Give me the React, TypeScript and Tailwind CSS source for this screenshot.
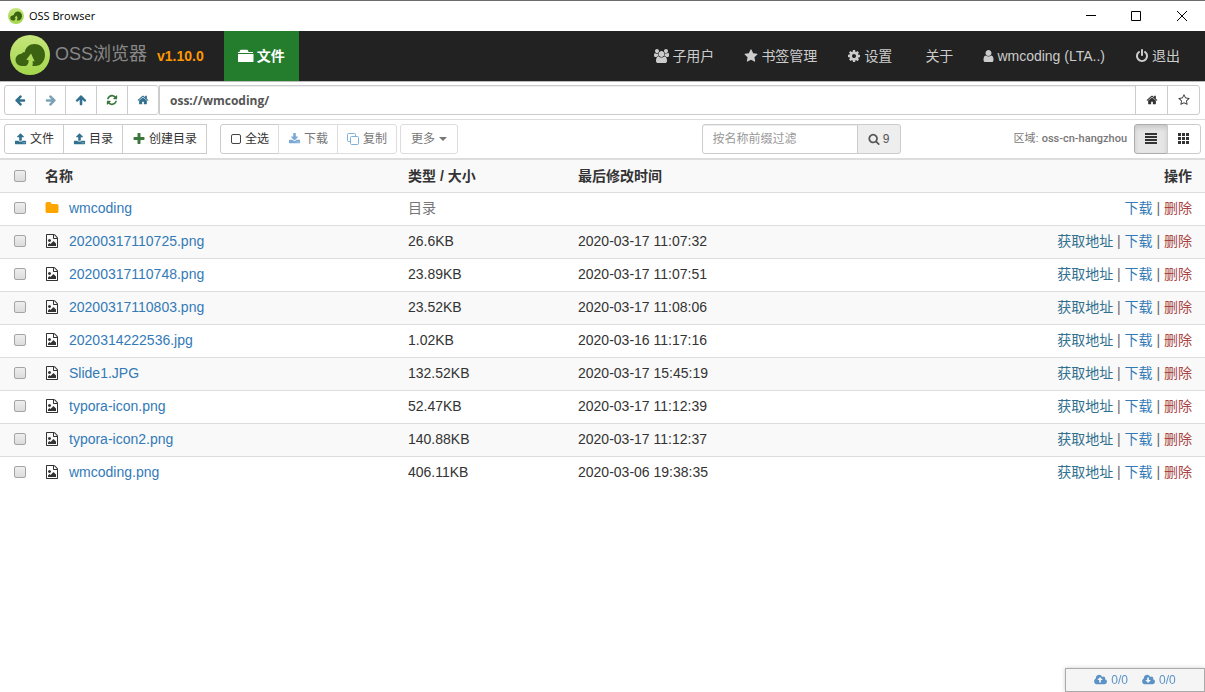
import React from "react";
import { useState } from "react";

type IconName = keyof typeof ICONS;

const CLOUD =
  "m640 288q0 159-112.5 271.5t-271.5 112.5h-1088q-185 0-316.5-131.5t-131.5-316.5q0-130 70-240t188-165q-2-30-2-43 0-212 150-362t362-150q156 0 285.5 87t188.5 231q71-62 166-62 106 0 181 75t75 181q0 76-41 138 130 31 213.5 135.5t83.5 238.5z";

const ICONS = {
  arrowLeft:
    "M1664 896v128q0 53-32.5 90.5t-84.5 37.5h-704l293 294q38 36 38 90t-38 90l-75 76q-37 37-90 37-52 0-91-37l-651-652q-37-37-37-90 0-52 37-91l651-650q38-38 91-38 52 0 90 38l75 74q38 38 38 91t-38 91l-293 293h704q52 0 84.5 37.5t32.5 90.5z",
  arrowRight:
    "M1600 960q0 54-37 91l-651 651q-39 37-91 37-51 0-90-37l-75-75q-38-38-38-91t38-91l293-293h-704q-52 0-84.5-37.5t-32.5-90.5v-128q0-53 32.5-90.5t84.5-37.5h704l-293-294q-38-36-38-90t38-90l75-75q38-38 90-38 53 0 91 38l651 651q37 35 37 90z",
  arrowUp:
    "M1675 971q0 51-37 90l-75 75q-38 38-91 38-54 0-90-38l-294-293v704q0 52-37.5 84.5t-90.5 32.5h-128q-53 0-90.5-32.5t-37.5-84.5v-704l-294 293q-36 38-90 38t-90-38l-75-75q-38-38-38-90 0-53 38-91l651-651q35-37 90-37 54 0 91 37l651 651q37 39 37 91z",
  refresh:
    "M1639 1056q0 5-1 7-64 268-268 434.5t-478 166.5q-146 0-282.5-55t-243.5-157l-129 129q-19 19-45 19t-45-19-19-45v-448q0-26 19-45t45-19h448q26 0 45 19t19 45-19 45l-137 137q71 66 161 102t187 36q134 0 250-65t186-179q11-17 53-117 8-23 30-23h192q13 0 22.5 9.5t9.5 22.5zm25-800v448q0 26-19 45t-45 19h-448q-26 0-45-19t-19-45 19-45l138-138q-148-137-349-137-134 0-250 65t-186 179q-11 17-53 117-8 23-30 23h-199q-13 0-22.5-9.5t-9.5-22.5v-7q65-268 270-434.5t480-166.5q146 0 284 55.5t245 156.5l130-129q19-19 45-19t45 19 19 45z",
  home: "M1472 992v480q0 26-19 45t-45 19h-384v-384h-256v384h-384q-26 0-45-19t-19-45v-480q0-1 .5-3t.5-3l575-474 575 474q1 2 1 6zm223-69l-62 74q-8 9-21 11h-3q-13 0-21-7l-692-577-692 577q-12 8-24 7-13-2-21-11l-62-74q-8-10-7-23.5t11-21.5l719-599q32-26 76-26t76 26l244 204v-195q0-14 9-23t23-9h192q14 0 23 9t9 23v408l219 182q10 8 11 21.5t-7 23.5z",
  starOutline:
    "M1201 1004l306-297-422-62-189-382-189 382-422 62 306 297-73 421 378-199 377 199zm527-357q0 22-26 48l-363 354 86 500q1 7 1 20 0 50-41 50-19 0-40-12l-449-236-449 236q-22 12-40 12-21 0-31.5-14.5t-10.5-35.5q0-6 2-20l86-500-364-354q-25-27-25-48 0-37 56-46l502-73 225-455q19-41 49-41t49 41l225 455 502 73q56 9 56 46z",
  star: "M1728 647q0 22-26 48l-363 354 86 500q1 7 1 20 0 21-10.5 35.5t-30.5 14.5q-19 0-40-12l-449-236-449 236q-22 12-40 12-21 0-31.5-14.5t-10.5-35.5q0-6 2-20l86-500-364-354q-25-27-25-48 0-37 56-46l502-73 225-455q19-41 49-41t49 41l225 455 502 73q56 9 56 46z",
  upload:
    "M1344 1472q0-26-19-45t-45-19-45 19-19 45 19 45 45 19 45-19 19-45zm256 0q0-26-19-45t-45-19-45 19-19 45 19 45 45 19 45-19 19-45zm128-224v320q0 40-28 68t-68 28h-1472q-40 0-68-28t-28-68v-320q0-40 28-68t68-28h427q21 56 70.5 92t110.5 36h256q61 0 110.5-36t70.5-92h427q40 0 68 28t28 68zm-325-648q-17 40-59 40h-256v448q0 26-19 45t-45 19h-256q-26 0-45-19t-19-45v-448h-256q-42 0-59-40-17-39 14-69l448-448q18-19 45-19t45 19l448 448q31 30 14 69z",
  download:
    "M1344 1344q0-26-19-45t-45-19-45 19-19 45 19 45 45 19 45-19 19-45zm256 0q0-26-19-45t-45-19-45 19-19 45 19 45 45 19 45-19 19-45zm128-224v320q0 40-28 68t-68 28h-1472q-40 0-68-28t-28-68v-320q0-40 28-68t68-28h465l135 136q58 56 136 56t136-56l136-136h464q40 0 68 28t28 68zm-325-569q17 41-14 70l-448 448q-18 19-45 19t-45-19l-448-448q-31-29-14-70 17-39 59-39h256v-448q0-26 19-45t45-19h256q26 0 45 19t19 45v448h256q42 0 59 39z",
  plus: "M1600 736v192q0 40-28 68t-68 28h-416v416q0 40-28 68t-68 28h-192q-40 0-68-28t-28-68v-416h-416q-40 0-68-28t-28-68v-192q0-40 28-68t68-28h416v-416q0-40 28-68t68-28h192q40 0 68 28t28 68v416h416q40 0 68 28t28 68z",
  cog: "M1152 896q0-106-75-181t-181-75-181 75-75 181 75 181 181 75 181-75 75-181zm512-109v222q0 12-8 23t-20 13l-185 28q-19 54-39 91 35 50 107 138 10 12 10 25t-9 23q-27 37-99 108t-94 71q-12 0-26-9l-138-108q-44 23-91 38-16 136-29 186-7 28-36 28h-222q-14 0-24.5-8.5t-11.5-21.5l-28-184q-49-16-90-37l-141 107q-10 9-25 9-14 0-25-11-126-114-165-168-7-10-7-23 0-12 8-23 15-21 51-66.5t54-70.5q-27-50-41-99l-183-27q-13-2-21-12.5t-8-23.5v-222q0-12 8-23t19-13l186-28q14-46 39-92-40-57-107-138-10-12-10-24 0-10 9-23 26-36 98.5-107.5t94.5-71.5q13 0 26 10l138 107q44-23 91-38 16-136 29-186 7-28 36-28h222q14 0 24.5 8.5t11.5 21.5l28 184q49 16 90 37l142-107q9-9 24-9 13 0 25 10 129 119 165 170 7 8 7 22 0 12-8 23-15 21-51 66.5t-54 70.5q26 50 41 98l183 28q13 2 21 12.5t8 23.5z",
  user: "M1536 1399q0 109-62.5 187t-150.5 78h-854q-88 0-150.5-78t-62.5-187q0-85 8.5-160.5t31.5-152 58.5-131 94-89 134.5-34.5q131 128 313 128t313-128q76 0 134.5 34.5t94 89 58.5 131 31.5 152 8.5 160.5zm-256-887q0 159-112.5 271.5t-271.5 112.5-271.5-112.5-112.5-271.5 112.5-271.5 271.5-112.5 271.5 112.5 112.5 271.5z",
  power:
    "M1664 896q0 156-61 298t-164 245-245 164-298 61-298-61-245-164-164-245-61-298q0-182 80.5-343t226.5-270q43-32 95.5-25t83.5 50q32 42 24.5 94.5t-49.5 84.5q-98 74-151.5 181t-53.5 228q0 104 40.5 198.5t109.5 163.5 163.5 109.5 198.5 40.5 198.5-40.5 163.5-109.5 109.5-163.5 40.5-198.5q0-121-53.5-228t-151.5-181q-42-32-49.5-84.5t24.5-94.5q31-43 84-50t95 25q146 109 226.5 270t80.5 343zm-640-768v640q0 52-38 90t-90 38-90-38-38-90v-640q0-52 38-90t90-38 90 38 38 90z",
  search:
    "M1216 832q0-185-131.5-316.5t-316.5-131.5-316.5 131.5-131.5 316.5 131.5 316.5 316.5 131.5 316.5-131.5 131.5-316.5zm512 832q0 52-38 90t-90 38q-54 0-90-38l-343-342q-179 124-399 124-143 0-273.5-55.5t-225-150-150-225-55.5-273.5 55.5-273.5 150-225 225-150 273.5-55.5 273.5 55.5 225 150 150 225 55.5 273.5q0 220-124 399l343 343q37 37 37 90z",
  image:
    "M1596 380q28 28 48 76t20 88v1152q0 40-28 68t-68 28h-1344q-40 0-68-28t-28-68v-1600q0-40 28-68t68-28h896q40 0 88 20t76 48zm-444-244v376h376q-10-29-22-41l-313-313q-12-12-41-22zm384 1528v-1024h-416q-40 0-68-28t-28-68v-416h-768v1536h1280zm-128-448v320h-1024v-192l192-192 128 128 384-384zm-832-192q-80 0-136-56t-56-136 56-136 136-56 136 56 56 136-56 136-136 56z",
  folder:
    "M1728 608v704q0 92-66 158t-158 66h-1216q-92 0-158-66t-66-158v-960q0-92 66-158t158-66h320q92 0 158 66t66 158v32h672q92 0 158 66t66 158z",
  users:
    "M529 896q-162 5-265 128h-134q-82 0-138-40.5t-56-118.5q0-353 124-353 6 0 43.5 21t97.5 42.5 119 21.5q67 0 133-23-5 37-5 66 0 159 90 290zm1071 637q0 120-73 189.5t-194 69.5h-874q-121 0-194-69.5t-73-189.5q0-53 3.5-103.5t14-109 26.5-108.5 43-97.5 62-81 85.5-53.5 111.5-20q10 0 43 21.5t73 48 107 48 135 21.5 135-21.5 107-48 73-48 43-21.5q61 0 111.5 20t85.5 53.5 62 81 43 97.5 26.5 108.5 14 109 3.5 103.5zm-1024-1277q0 106-75 181t-181 75-181-75-75-181 75-181 181-75 181 75 75 181zm704 384q0 159-112.5 271.5t-271.5 112.5-271.5-112.5-112.5-271.5 112.5-271.5 271.5-112.5 271.5 112.5 112.5 271.5zm576 225q0 78-56 118.5t-138 40.5h-134q-103-123-265-128 90-131 90-290 0-29-5-66 66 23 133 23 59 0 119-21.5t97.5-42.5 43.5-21q124 0 124 353zm-128-609q0 106-75 181t-181 75-181-75-75-181 75-181 181-75 181 75 75 181z",
  cloudUp:
    "M1216 864q0-14-9-23l-352-352q-9-9-23-9t-23 9l-351 351q-10 12-10 24 0 14 9 23t23 9h224v352q0 13 9.5 22.5t22.5 9.5h192q13 0 22.5-9.5t9.5-22.5v-352h224q13 0 22.5-9.5t9.5-22.5z" +
    CLOUD,
  cloudDown:
    "M1216 928q0-14-9-23t-23-9h-224v-352q0-13-9.5-22.5t-22.5-9.5h-192q-13 0-22.5 9.5t-9.5 22.5v352h-224q-13 0-22.5 9.5t-9.5 22.5q0 14 9 23l352 352q9 9 23 9t23-9l351-351q10-12 10-24z" +
    CLOUD.replace("m640 288", "m640 224"),
};

// glyphs that are not 14 units wide
const VIEW_BOXES: Partial<Record<IconName, string>> = {
  user: "192 0 1408 1792",
  users: "-64 0 1920 1792",
  cloudUp: "-64 0 1920 1792",
  cloudDown: "-64 0 1920 1792",
};

const Icon: React.FC<{ name: IconName; className?: string }> = ({
  name,
  className = "h-3.5 w-3.5",
}) => (
  <svg
    viewBox={VIEW_BOXES[name] || "0 0 1792 1792"}
    fill="currentColor"
    aria-hidden="true"
    className={`shrink-0 ${className}`}
  >
    <path d={ICONS[name]} />
  </svg>
);

const Logo: React.FC<{ className: string }> = ({ className }) => (
  <svg viewBox="0 0 40 40" aria-hidden="true" className={`shrink-0 ${className}`}>
    <defs>
      <linearGradient id="logoFill" x1="0" y1="0" x2="0" y2="1">
        <stop offset="0" stopColor="#c6e67c" />
        <stop offset="1" stopColor="#a3d64b" />
      </linearGradient>
    </defs>
    <circle cx="20" cy="20" r="20" fill="url(#logoFill)" />
    <path
      d="M11.500 31A6 6 0 0 1 5.500 25C5.500 21.500 8 19 11.500 18.700C12.300 17.600 13.500 17.200 14.700 17.300C15.500 12.500 19.500 9 24.500 9C30.500 9 35 13.700 35 19.700C35 26 31 31 25 31H22.300C23 29.500 22.900 28 22.500 26L24.700 26.500L21 18.500L16.300 24.800L18.700 25.300C18.700 28 17.700 30 16 31Z"
      fill="#3c6311"
    />
  </svg>
);

interface FileRow {
  name: string;
  size: string;
  date?: string;
  folder?: boolean;
}

const files: FileRow[] = [
  { name: "wmcoding", size: "目录", folder: true },
  { name: "20200317110725.png", size: "26.6KB", date: "2020-03-17 11:07:32" },
  { name: "20200317110748.png", size: "23.89KB", date: "2020-03-17 11:07:51" },
  { name: "20200317110803.png", size: "23.52KB", date: "2020-03-17 11:08:06" },
  { name: "2020314222536.jpg", size: "1.02KB", date: "2020-03-16 11:17:16" },
  { name: "Slide1.JPG", size: "132.52KB", date: "2020-03-17 15:45:19" },
  { name: "typora-icon.png", size: "52.47KB", date: "2020-03-17 11:12:39" },
  { name: "typora-icon2.png", size: "140.88KB", date: "2020-03-17 11:12:37" },
  { name: "wmcoding.png", size: "406.11KB", date: "2020-03-06 19:38:35" },
];

const TitleBar: React.FC = () => (
  <header className="flex h-[31px] items-center border-t border-[#6d6b6d] bg-white pl-2 text-black">
    <Logo className="h-4 w-4" />
    <h1 className="ml-[5px] flex-1 font-['Open_Sans','Noto_Sans',sans-serif] text-[11px]">
      OSS Browser
    </h1>
    <button aria-label="Minimize" className="flex h-full w-[45px] items-center justify-center">
      <svg viewBox="0 0 10 10" className="h-2.5 w-2.5" stroke="currentColor">
        <path d="M0 4.500h10" />
      </svg>
    </button>
    <button aria-label="Maximize" className="flex h-full w-[46px] items-center justify-center">
      <svg viewBox="0 0 10 10" className="h-2.5 w-2.5" stroke="currentColor" fill="none">
        <path d="M.5.5h9v9h-9z" />
      </svg>
    </button>
    <button aria-label="Close" className="flex h-full w-[46px] items-center justify-center">
      <svg viewBox="0 0 10 10" className="h-2.5 w-2.5" stroke="currentColor">
        <path d="M0 0l10 10M10 0L0 10" />
      </svg>
    </button>
  </header>
);

const NavLink: React.FC<{
  icon?: IconName;
  iconClass?: string;
  children: React.ReactNode;
}> = ({ icon, iconClass, children }) => (
  <a href="#" className="flex items-center gap-[3px] px-[15px] hover:text-white">
    {icon ? <Icon name={icon} className={iconClass} /> : <span />}
    {children}
  </a>
);

const NavBar: React.FC = () => (
  <nav className="flex h-[51px] items-stretch border-b border-[#bbb] bg-[#222] pr-2.5 text-sm whitespace-nowrap text-[#ccc]">
    <a href="#" className="flex items-center pl-2.5">
      <Logo className="mb-0.5 h-10 w-10" />
      <span className="mb-1 ml-[5px] text-lg leading-5 text-[#888]">OSS浏览器</span>
      <span className="ml-2.5 text-sm font-bold text-[#ff9800]">v1.10.0</span>
    </a>
    <a
      href="#"
      className="ml-5 flex items-center gap-[3px] bg-[#247d2d] px-3.5 font-bold text-white"
    >
      <svg viewBox="0 0 16 14" className="h-3.5 w-4" fill="currentColor" aria-hidden="true">
        <path d="M0 3h1.500l.5-1.500q.3-.7 1-.7h6q.7 0 1 .7l.5 1.500H15v1H0zM0 5h15.500v7.500q0 .5-.5.5H.5q-.5 0-.5-.5z" />
      </svg>
      文件
    </a>
    <div className="ml-auto flex items-stretch">
      <NavLink icon="users" iconClass="h-3.5 w-[15px]">
        子用户
      </NavLink>
      <NavLink icon="star">书签管理</NavLink>
      <NavLink icon="cog">设置</NavLink>
      <NavLink>关于</NavLink>
      <NavLink icon="user" iconClass="h-3.5 w-[11px]">
        wmcoding (LTA..)
      </NavLink>
      <NavLink icon="power">退出</NavLink>
    </div>
  </nav>
);

const iconButton =
  "-ml-px flex h-[30px] items-center justify-center border border-[#ccc] bg-white";

const AddressBar: React.FC = () => {
  const [address, setAddress] = useState<string>("oss://wmcoding/");

  return (
    <div className="flex items-center border-b border-[#ddd] pt-[3px] pr-[5px] pb-1 pl-1">
      <div className="flex pl-px text-[#31708f]">
        <button aria-label="后退" className={`${iconButton} w-8 rounded-l-[3px]`}>
          <Icon name="arrowLeft" className="h-3 w-3" />
        </button>
        <button aria-label="前进" disabled className={`${iconButton} w-[31px] text-[#31708f]/65`}>
          <Icon name="arrowRight" className="h-3 w-3" />
        </button>
        <button aria-label="上级目录" className={`${iconButton} w-8`}>
          <Icon name="arrowUp" className="h-3 w-3" />
        </button>
        <button aria-label="刷新" className={`${iconButton} w-8 text-[#3c763d]`}>
          <Icon name="refresh" className="h-3 w-3" />
        </button>
        <button aria-label="首页" className={`${iconButton} w-8 rounded-r-[3px]`}>
          <Icon name="home" className="h-3 w-3" />
        </button>
      </div>
      <input
        type="text"
        aria-label="地址"
        value={address}
        onChange={(e) => setAddress(e.target.value)}
        className="h-[30px] min-w-0 flex-1 border border-[#ccc] px-2.5 font-['Open_Sans',sans-serif] text-xs font-bold text-[#555] shadow-[inset_0_1px_1px_rgba(0,0,0,0.075)]"
      />
      <button aria-label="设为首页" className={`${iconButton} w-[33px]`}>
        <Icon name="home" className="h-3 w-3" />
      </button>
      <button aria-label="收藏" className={`${iconButton} w-[33px] rounded-r-[3px]`}>
        <Icon name="starOutline" className="h-3 w-3" />
      </button>
    </div>
  );
};

const toolButton =
  "-ml-px flex h-[30px] items-center gap-[3px] border bg-white px-[9px]";

const ToolBar: React.FC<{ allChecked: boolean; onToggleAll: () => void }> = ({
  allChecked,
  onToggleAll,
}) => {
  const [filter, setFilter] = useState<string>("");

  return (
    <div className="flex items-center border-b-2 border-[#ddd] px-1 py-1 text-xs whitespace-nowrap">
      <div className="flex pl-px">
        <button className={`${toolButton} rounded-l-[3px] border-[#ccc]`}>
          <Icon name="upload" className="h-3 w-[13px] text-[#31708f]" />
          文件
        </button>
        <button className={`${toolButton} border-[#ccc]`}>
          <Icon name="upload" className="h-3 w-[13px] text-[#31708f]" />
          目录
        </button>
        <button className={`${toolButton} border-[#ccc]`}>
          <Icon name="plus" className="h-3.5 w-3.5 text-[#3c763d]" />
          创建目录
        </button>
      </div>
      <div className="ml-[13px] flex pl-px">
        <label className={`${toolButton} rounded-l-[3px] border-[#ccc]`}>
          <input
            type="checkbox"
            checked={allChecked}
            onChange={onToggleAll}
            className="mx-px h-2.5 w-2.5 appearance-none rounded-[2px] border border-[#444] checked:bg-[#444]"
          />
          全选
        </label>
        <button disabled className={`${toolButton} border-[#ddd] text-[#777]`}>
          <Icon name="download" className="h-3 w-[13px] text-[#7aa9d4]" />
          下载
        </button>
        <button disabled className={`${toolButton} rounded-r-[3px] border-[#ddd] px-2.5 text-[#777]`}>
          <svg viewBox="0 0 13 12" className="h-3 w-[13px]" aria-hidden="true" fill="#fff" stroke="#7fb0da">
            <rect x=".5" y=".5" width="8" height="8" rx="1" />
            <rect x="3.500" y="3.500" width="8" height="8" rx="1" />
          </svg>
          复制
        </button>
      </div>
      <button disabled className="ml-[3px] flex h-[30px] items-center gap-1 rounded-[3px] border border-[#ddd] bg-white px-2.5 text-[#777]">
        更多
        <svg viewBox="0 0 8 4" className="h-1 w-2" fill="currentColor" aria-hidden="true">
          <path d="M0 0h8L4 4z" />
        </svg>
      </button>
      <div className="ml-auto flex">
        <input
          type="text"
          aria-label="过滤"
          placeholder="按名称前缀过滤"
          value={filter}
          onChange={(e) => setFilter(e.target.value)}
          className="h-[30px] w-[156px] rounded-l-[3px] border border-[#ccc] px-2.5 shadow-[inset_0_1px_1px_rgba(0,0,0,0.075)] placeholder:text-[#999]"
        />
        <span className="-ml-px flex h-[30px] w-11 items-center justify-center gap-[3px] rounded-r-[3px] border border-[#ccc] bg-[#eee] text-[#555]">
          <Icon name="search" className="h-3 w-3" />9
        </span>
      </div>
      <div className="ml-[113px] text-[11px] text-[#777]">
        区域:{" "}
        <span className="font-['Roboto',sans-serif] font-medium">oss-cn-hangzhou</span>
      </div>
      <div className="ml-[7px] flex">
        <button
          aria-label="列表"
          className="flex h-[30px] w-[34px] items-center justify-center rounded-l-[3px] border border-[#adadad] bg-[#e6e6e6] shadow-[inset_0_3px_5px_rgba(0,0,0,0.125)]"
        >
          <svg viewBox="0 0 12 12" className="h-3 w-3" fill="currentColor" aria-hidden="true">
            <path d="M0 0h12v2H0zM0 3h12v2H0zM0 6h12v2H0zM0 9h12v2H0z" />
          </svg>
        </button>
        <button
          aria-label="图标"
          className="-ml-px flex h-[30px] w-[34px] items-center justify-center rounded-r-[3px] border border-[#ccc] bg-white"
        >
          <svg viewBox="0 0 12 12" className="h-3 w-3" fill="currentColor" aria-hidden="true">
            <path d="M0 0h3v3H0zM4 0h3v3H4zM8 0h3v3H8zM0 4h3v3H0zM4 4h3v3H4zM8 4h3v3H8zM0 8h3v3H0zM4 8h3v3H4zM8 8h3v3H8z" />
          </svg>
        </button>
      </div>
    </div>
  );
};

const checkbox =
  "block h-3 w-3 appearance-none rounded-[2px] border border-[#a5a5a5] bg-linear-to-b from-[#eee] to-[#dcdcdc] checked:from-[#337ab7] checked:to-[#337ab7]";

const FileTable: React.FC<{
  selected: string[];
  onToggle: (name: string) => void;
  onToggleAll: () => void;
}> = ({ selected, onToggle, onToggleAll }) => (
  <table className="w-full table-fixed text-left text-sm">
    <colgroup>
      <col className="w-[37px]" />
      <col className="w-[363px]" />
      <col className="w-[170px]" />
      <col />
      <col className="w-[200px]" />
    </colgroup>
    <thead>
      <tr className="h-8 border-b border-[#ddd] bg-[#f9f9f9]">
        <th className="pl-3.5">
          <input
            type="checkbox"
            aria-label="全选"
            checked={selected.length === files.length}
            onChange={onToggleAll}
            className={checkbox}
          />
        </th>
        <th className="px-2">名称</th>
        <th className="px-2">类型 / 大小</th>
        <th className="px-2">最后修改时间</th>
        <th className="pr-[13px] text-right">操作</th>
      </tr>
    </thead>
    <tbody>
      {files.map((file) => (
        <tr
          key={file.name}
          className="h-[33px] border-b border-[#ddd] last:border-b-0 even:bg-[#f9f9f9]"
        >
          <td className="pb-0.5 pl-3.5">
            <input
              type="checkbox"
              aria-label={file.name}
              checked={selected.includes(file.name)}
              onChange={() => onToggle(file.name)}
              className={checkbox}
            />
          </td>
          <td className="px-2 pb-0.5">
            <div className="flex items-center gap-2.5">
              <Icon
                name={file.folder ? "folder" : "image"}
                className={file.folder ? "h-3.5 w-3.5 text-[#ffa500]" : "h-3.5 w-3.5"}
              />
              <a href="#" className="text-[#337ab7]">
                {file.name}
              </a>
            </div>
          </td>
          <td className={file.folder ? "px-2 pb-0.5 text-[#777]" : "px-2 pb-0.5"}>
            {file.size}
          </td>
          <td className="px-2 pb-0.5">{file.date}</td>
          <td className="pr-[13px] pb-0.5 text-right whitespace-nowrap text-[#666]">
            {!file.folder && (
              <>
                <a href="#" className="text-[#31708f]">
                  获取地址
                </a>
                {" | "}
              </>
            )}
            <a href="#" className="text-[#337ab7]">
              下载
            </a>
            {" | "}
            <a href="#" className="text-[#a94442]">
              删除
            </a>
          </td>
        </tr>
      ))}
    </tbody>
  </table>
);

const TransferStatus: React.FC = () => (
  <div className="fixed right-0 bottom-0 flex h-6 w-[140px] items-center justify-center gap-3.5 border border-[#aaa] bg-[#f5f5f5] text-xs text-[#5b93c7] shadow-[0_0_4px_rgba(0,0,0,0.2)]">
    <button className="flex items-center gap-1">
      <Icon name="cloudUp" className="h-3 w-[13px]" />
      0/0
    </button>
    <button className="flex items-center gap-1">
      <Icon name="cloudDown" className="h-3 w-[13px]" />
      0/0
    </button>
  </div>
);

const App: React.FC = () => {
  const [selected, setSelected] = useState<string[]>([]);

  const toggle = (name: string) => {
    setSelected(
      selected.includes(name)
        ? selected.filter((item) => item !== name)
        : [...selected, name]
    );
  };

  const toggleAll = () => {
    setSelected(
      selected.length === files.length ? [] : files.map((file) => file.name)
    );
  };

  return (
    <div className="min-h-screen bg-white font-['Liberation_Sans','Noto_Sans_CJK_SC',sans-serif] text-[#333]">
      <TitleBar />
      <NavBar />
      <main>
        <AddressBar />
        <ToolBar
          allChecked={selected.length === files.length}
          onToggleAll={toggleAll}
        />
        <FileTable selected={selected} onToggle={toggle} onToggleAll={toggleAll} />
      </main>
      <TransferStatus />
    </div>
  );
};

export default App;
